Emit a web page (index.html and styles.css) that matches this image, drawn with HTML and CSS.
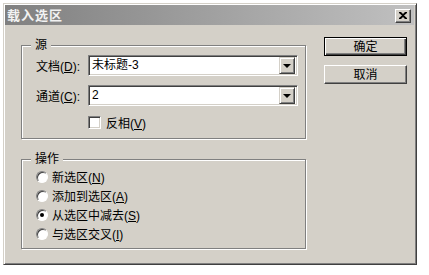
FILE: index.html
```html
<!DOCTYPE html>
<html>
<head>
<meta charset="utf-8">
<link rel="stylesheet" href="styles.css">
</head>
<body>
<div class="dialog">
  <div class="titlebar">
    <span class="title">载入选区</span>
    <span class="close"><svg width="8" height="7" viewBox="0 0 8 7"><path d="M0 0h2l2 2 2-2h2v1L5 3.5 8 6v1H6L4 5 2 7H0V6l3-2.5L0 1z" fill="#000"/></svg></span>
  </div>
  <div class="content">
    <div class="left">
      <div class="group g1">
        <span class="legend">源</span>
        <div class="row">
          <span class="label">文档(<u>D</u>):</span>
          <div class="combo"><span class="value">未标题-3</span><span class="drop"><i></i></span></div>
        </div>
        <div class="row">
          <span class="label">通道(<u>C</u>):</span>
          <div class="combo"><span class="value">2</span><span class="drop"><i></i></span></div>
        </div>
        <div class="row check-row">
          <span class="checkbox"></span>
          <span class="ctext">反相(<u>V</u>)</span>
        </div>
      </div>
      <div class="group g2">
        <span class="legend">操作</span>
        <div class="radio-row"><span class="radio"></span><span>新选区(<u>N</u>)</span></div>
        <div class="radio-row"><span class="radio"></span><span>添加到选区(<u>A</u>)</span></div>
        <div class="radio-row"><span class="radio on"></span><span>从选区中减去(<u>S</u>)</span></div>
        <div class="radio-row"><span class="radio"></span><span>与选区交叉(<u>I</u>)</span></div>
      </div>
    </div>
    <div class="right">
      <div class="btn default"><span>确定</span></div>
      <div class="btn"><span>取消</span></div>
    </div>
  </div>
</div>
</body>
</html>
```
FILE: styles.css
```css
html, body {
  margin: 0;
  background: #fff;
}
body {
  padding: 3px 0 0 3px;
  font-family: "Liberation Sans", "Noto Sans CJK SC", sans-serif;
  font-size: 12px;
  color: #000;
}
.dialog {
  width: 414px;
  height: 262px;
  box-sizing: border-box;
  background: #d4d0c8;
  border: 1px solid;
  border-color: #d4d0c8 #404040 #404040 #d4d0c8;
  box-shadow: inset 1px 1px 0 #fff, inset -1px -1px 0 #808080;
  padding: 1px 2px 2px 1px;
}
.titlebar {
  height: 20px;
  background: linear-gradient(to right, #808080, #c0c0c0);
  display: flex;
  align-items: center;
  justify-content: space-between;
  padding: 0 3px 0 2px;
}
.title {
  color: #f2f2f2;
  font-weight: bold;
  font-size: 13px;
  letter-spacing: 1px;
  line-height: 15px;
}
.close {
  width: 16px;
  height: 14px;
  box-sizing: border-box;
  background: #d4d0c8;
  border: 1px solid;
  border-color: #fff #404040 #404040 #fff;
  box-shadow: inset -1px -1px 0 #808080;
  display: flex;
  align-items: center;
  justify-content: center;
  margin-top: 1px;
}
.close svg { display: block; margin-left: -1px; }
.content {
  display: flex;
  padding: 12px 0 0 16px;
  gap: 18px;
}
.left {
  width: 285px;
  display: flex;
  flex-direction: column;
  gap: 20px;
  padding-top: 8px;
}
.group {
  position: relative;
  box-sizing: border-box;
  border: 1px solid #808080;
  box-shadow: inset 1px 1px 0 #fff, 1px 1px 0 #fff;
}
.legend {
  position: absolute;
  top: -9px;
  left: 9px;
  padding: 0 4px 0 4px;
  background: #d4d0c8;
  line-height: 16px;
}
.g1 {
  height: 94px;
  padding: 9px 0 0 14px;
}
.row {
  display: flex;
  align-items: center;
  height: 21px;
  margin-bottom: 9px;
}
.label {
  width: 52px;
}
.combo {
  width: 210px;
  height: 21px;
  box-sizing: border-box;
  background: #fff;
  border: 1px solid;
  border-color: #808080 #fff #fff #808080;
  box-shadow: inset 1px 1px 0 #404040, inset -1px -1px 0 #d4d0c8;
  display: flex;
  align-items: center;
  justify-content: space-between;
  padding: 0 2px 0 3px;
}
.value { line-height: 15px; }
.drop {
  width: 16px;
  height: 17px;
  box-sizing: border-box;
  background: #d4d0c8;
  border: 1px solid;
  border-color: #d4d0c8 #404040 #404040 #d4d0c8;
  box-shadow: inset 1px 1px 0 #fff, inset -1px -1px 0 #808080;
  display: flex;
  align-items: center;
  justify-content: center;
}
.drop i {
  width: 0;
  height: 0;
  border-left: 4px solid transparent;
  border-right: 4px solid transparent;
  border-top: 4px solid #000;
  margin-top: 1px;
}
.check-row {
  height: 14px;
  margin: 0 0 0 52px;
}
.checkbox {
  width: 13px;
  height: 13px;
  box-sizing: border-box;
  background: #fff;
  border: 1px solid;
  border-color: #808080 #fff #fff #808080;
  box-shadow: inset 1px 1px 0 #404040, inset -1px -1px 0 #d4d0c8;
  margin-right: 5px;
}
.g2 {
  height: 90px;
  padding: 7px 0 0 14px;
}
.radio-row {
  display: flex;
  align-items: center;
  height: 19px;
}
.radio {
  width: 12px;
  height: 12px;
  box-sizing: border-box;
  border-radius: 50%;
  background: #fff;
  border: 1px solid;
  border-color: #808080 #fff #fff #808080;
  box-shadow: inset 1px 1px 0 #404040;
  margin-right: 4px;
  display: flex;
  align-items: center;
  justify-content: center;
}
.radio.on::after {
  content: "";
  width: 4px;
  height: 4px;
  border-radius: 50%;
  background: #000;
}
.right {
  display: flex;
  flex-direction: column;
  gap: 9px;
}
.btn {
  width: 83px;
  height: 19px;
  box-sizing: border-box;
  background: #d4d0c8;
  border: 1px solid;
  border-color: #fff #404040 #404040 #fff;
  box-shadow: inset -1px -1px 0 #808080;
  display: flex;
  align-items: center;
  justify-content: center;
}
.btn.default {
  border: 1px solid #000;
  box-shadow: inset 1px 1px 0 #fff, inset -1px -1px 0 #404040, inset -2px -2px 0 #808080;
}
.btn span { line-height: 14px; }
```
